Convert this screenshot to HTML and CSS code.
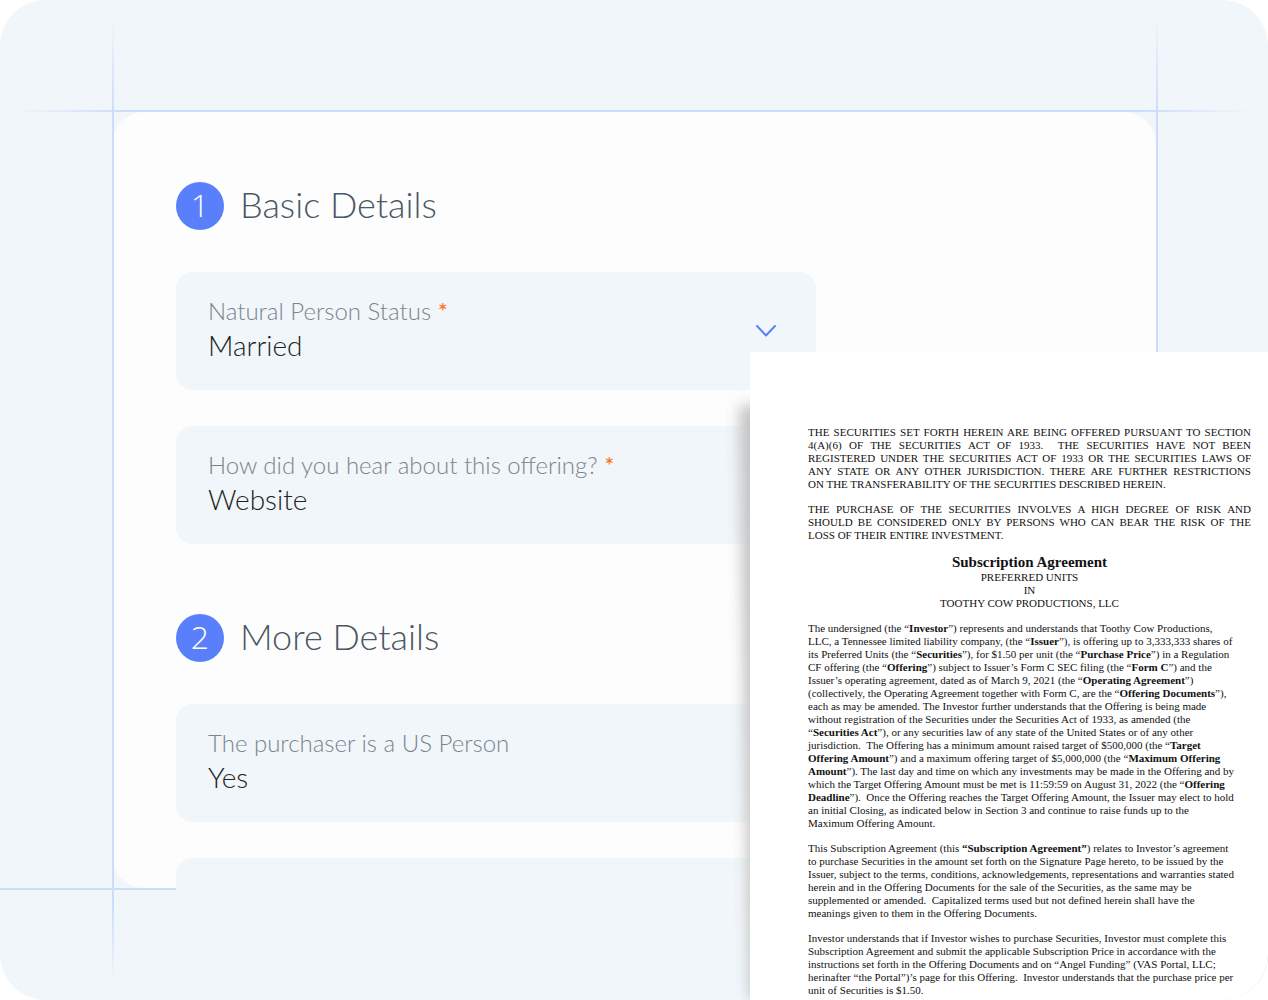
FILE: index.html
```
<!DOCTYPE html>
<html lang="en">

<head>
  <meta charset="UTF-8">
  <meta name="viewport" content="width=device-width, initial-scale=1.0">
  <title>Subscription Agreement</title>
  <link rel="stylesheet" href="styles.css">
</head>

<body>
  <main class="stage">
    <form class="card">
      <section class="step">
        <h2 class="step-title"><span class="badge">1</span>Basic Details</h2>
        <div class="field">
          <label for="status">Natural Person Status <span class="required">*</span></label>
          <select id="status">
            <option>Married</option>
            <option>Single</option>
          </select>
          <svg class="chevron" viewBox="0 0 22 14" aria-hidden="true">
            <path d="M2 2 L11 11.5 L20 2" />
          </svg>
        </div>
        <div class="field">
          <label for="source">How did you hear about this offering? <span class="required">*</span></label>
          <select id="source">
            <option>Website</option>
            <option>Friend</option>
          </select>
        </div>
      </section>
      <section class="step">
        <h2 class="step-title"><span class="badge">2</span>More Details</h2>
        <div class="field">
          <label for="usPerson">The purchaser is a US Person</label>
          <select id="usPerson">
            <option>Yes</option>
            <option>No</option>
          </select>
        </div>
        <div class="field"></div>
      </section>
    </form>

    <!-- guide lines around the card -->
    <span class="guide guide-top"></span>
    <span class="guide guide-left"></span>
    <span class="guide guide-right"></span>
    <span class="guide guide-bottom"></span>

    <span class="page-shadow"></span>
    <article class="page">
      <p class="justified">
        THE SECURITIES SET FORTH HEREIN ARE BEING OFFERED PURSUANT TO SECTION<br>
        4(A)(6) OF THE SECURITIES ACT OF 1933.&nbsp; THE SECURITIES HAVE NOT BEEN<br>
        REGISTERED UNDER THE SECURITIES ACT OF 1933 OR THE SECURITIES LAWS OF<br>
        ANY STATE OR ANY OTHER JURISDICTION. THERE ARE FURTHER RESTRICTIONS
        <span class="last">ON THE TRANSFERABILITY OF THE SECURITIES DESCRIBED HEREIN.</span>
      </p>
      <p class="justified">
        THE PURCHASE OF THE SECURITIES INVOLVES A HIGH DEGREE OF RISK AND<br>
        SHOULD BE CONSIDERED ONLY BY PERSONS WHO CAN BEAR THE RISK OF THE
        <span class="last">LOSS OF THEIR ENTIRE INVESTMENT.</span>
      </p>
      <header class="page-title">
        <h1>Subscription Agreement</h1>
        <p>PREFERRED UNITS<br>IN<br>TOOTHY COW PRODUCTIONS, LLC</p>
      </header>
      <p>
        The undersigned (the “<b>Investor</b>”) represents and understands that Toothy Cow Productions,<br>
        LLC, a Tennessee limited liability company, (the “<b>Issuer</b>”), is offering up to 3,333,333 shares of<br>
        its Preferred Units (the “<b>Securities</b>”), for $1.50 per unit (the “<b>Purchase Price</b>”) in a Regulation<br>
        CF offering (the “<b>Offering</b>”) subject to Issuer’s Form C SEC filing (the “<b>Form C</b>”) and the<br>
        Issuer’s operating agreement, dated as of March 9, 2021 (the “<b>Operating Agreement</b>”)<br>
        (collectively, the Operating Agreement together with Form C, are the “<b>Offering Documents</b>”),<br>
        each as may be amended. The Investor further understands that the Offering is being made<br>
        without registration of the Securities under the Securities Act of 1933, as amended (the<br>
        “<b>Securities Act</b>”), or any securities law of any state of the United States or of any other<br>
        jurisdiction.&nbsp; The Offering has a minimum amount raised target of $500,000 (the “<b>Target<br>
        Offering Amount</b>”) and a maximum offering target of $5,000,000 (the “<b>Maximum Offering<br>
        Amount</b>”). The last day and time on which any investments may be made in the Offering and by<br>
        which the Target Offering Amount must be met is 11:59:59 on August 31, 2022 (the “<b>Offering<br>
        Deadline</b>”).&nbsp; Once the Offering reaches the Target Offering Amount, the Issuer may elect to hold<br>
        an initial Closing, as indicated below in Section 3 and continue to raise funds up to the<br>
        Maximum Offering Amount.
      </p>
      <p>
        This Subscription Agreement (this <b>“Subscription Agreement”</b>) relates to Investor’s agreement<br>
        to purchase Securities in the amount set forth on the Signature Page hereto, to be issued by the<br>
        Issuer, subject to the terms, conditions, acknowledgements, representations and warranties stated<br>
        herein and in the Offering Documents for the sale of the Securities, as the same may be<br>
        supplemented or amended.&nbsp; Capitalized terms used but not defined herein shall have the<br>
        meanings given to them in the Offering Documents.
      </p>
      <p>
        Investor understands that if Investor wishes to purchase Securities, Investor must complete this<br>
        Subscription Agreement and submit the applicable Subscription Price in accordance with the<br>
        instructions set forth in the Offering Documents and on “Angel Funding” (VAS Portal, LLC;<br>
        herinafter “the Portal”)’s page for this Offering.&nbsp; Investor understands that the purchase price per<br>
        unit of Securities is $1.50.
      </p>
    </article>
  </main>
</body>

</html>
```
FILE: styles.css
```
* {
  box-sizing: border-box;
}

body {
  margin: 0;
  background-color: #fff;
  font-family: Lato, "Open Sans", sans-serif;
}

.stage {
  position: relative;
  height: 100vh;
  padding: 112px;
  background-color: #f0f6fa;
  border-radius: 46px;
  overflow: hidden;
}

.card {
  height: 100%;
  padding: 70px 64px;
  background-color: #fdfdfd;
  border-radius: 32px;
}

.step {
  display: flex;
  flex-direction: column;
  gap: 36px;
  max-width: 640px;
  margin-bottom: 70px;
}

.step-title {
  display: flex;
  align-items: flex-start;
  gap: 16px;
  height: 48px;
  margin: 0 0 6px;
  font-size: 36px;
  line-height: 45px;
  font-weight: 300;
  color: #4a5764;
}

.badge {
  width: 48px;
  height: 48px;
  border-radius: 50%;
  background-color: #5980fa;
  color: #fff;
  font-family: "Open Sans", sans-serif;
  font-size: 32px;
  text-align: center;
}

.field {
  position: relative;
  z-index: 1;
  display: flex;
  flex-direction: column;
  min-height: 118px;
  padding: 24px 32px;
  background-color: #f0f6fa;
  border-radius: 16px;
}

.field label {
  font-size: 24px;
  line-height: 30px;
  font-weight: 300;
  color: #7b848d;
}

.required {
  color: #ff6f0f;
  font-weight: 400;
}

.field select {
  appearance: none;
  padding: 0;
  border: 0;
  background: none;
  font-family: inherit;
  font-size: 28px;
  line-height: 38px;
  font-weight: 300;
  color: #222;
}

.chevron {
  position: absolute;
  right: 39px;
  top: 52px;
  width: 22px;
  height: 14px;
  fill: none;
  stroke: #5980fa;
  stroke-width: 2;
  stroke-linecap: round;
  stroke-linejoin: round;
}

.guide {
  position: absolute;
}

.guide-top,
.guide-bottom {
  left: 0;
  right: 0;
  height: 2px;
}

.guide-left,
.guide-right {
  top: 0;
  bottom: 0;
  width: 2px;
}

.guide-top {
  top: 110px;
  background: linear-gradient(to right, transparent 16px, #ccdcfb 128px, #ccdcfb calc(100% - 128px), transparent calc(100% - 16px));
}

.guide-bottom {
  bottom: 110px;
  background-color: #ccdcfb;
}

.guide-left,
.guide-right {
  background: linear-gradient(transparent 16px, #ccdcfb 112px, #ccdcfb calc(100% - 96px), transparent calc(100% - 16px));
}

.guide-left {
  left: 112px;
}

.guide-right {
  right: 110px;
}

/* slightly turned so that it fades towards the bottom of the page */
.page-shadow {
  position: absolute;
  z-index: 2;
  right: 0;
  top: 406px;
  bottom: 0;
  width: 529px;
  background-color: #c4c4c4;
  transform: rotate(-1deg);
  transform-origin: left top;
  filter: blur(7px);
}

.page {
  position: absolute;
  z-index: 3;
  top: 352px;
  right: 0;
  bottom: 0;
  width: 518px;
  padding: 74px 17px 0 58px;
  background-color: #fff;
  color: #111;
  font-family: "Liberation Serif", "Times New Roman", serif;
  font-size: 11px;
  line-height: 13px;
  white-space: nowrap;
  overflow: hidden;
}

.page p {
  margin: 0 0 12px;
}

.page .justified {
  text-align: justify;
  text-align-last: justify;
  white-space: normal;
}

.last {
  display: block;
  text-align-last: left;
}

.page-title {
  text-align: center;
}

.page-title h1 {
  margin: 0;
  font-size: 15px;
  line-height: 17px;
}
```
